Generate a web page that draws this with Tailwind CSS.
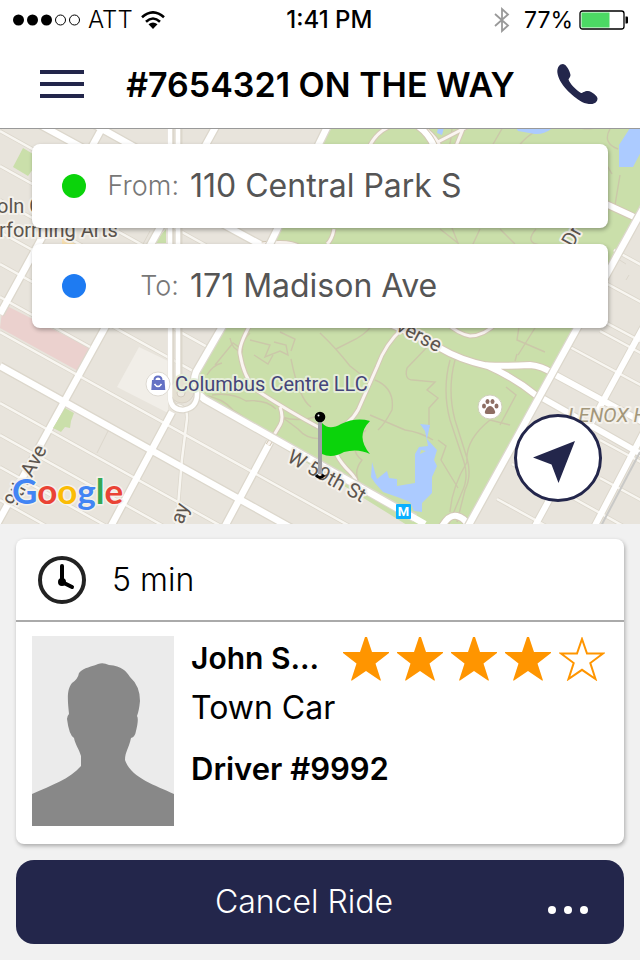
<!DOCTYPE html>
<html lang="en">
  <head>
    <meta charset="UTF-8" />
    <meta name="viewport" content="width=device-width, initial-scale=1.0" />
    <title>Ride status</title>
    <script src="https://cdn.jsdelivr.net/npm/@tailwindcss/browser@4"></script>
  </head>
  <body class="flex min-h-screen flex-col bg-[#f1f1f1] font-['Inter',sans-serif] text-black">
    <header class="border-b border-[#999] bg-white">
      <!-- status bar -->
      <div class="flex h-10 items-center justify-between px-3 text-[24px]">
        <div class="flex items-center gap-2">
          <svg class="h-3 w-[68px]" viewBox="0 0 68 12" aria-hidden="true">
            <circle cx="6.500" cy="6" r="5.500" />
            <circle cx="20.500" cy="6" r="5.500" />
            <circle cx="34.500" cy="6" r="5.500" />
            <g fill="none" stroke="#000">
              <circle cx="48.500" cy="6" r="5" />
              <circle cx="62.500" cy="6" r="5" />
            </g>
          </svg>
          <span class="font-light">ATT</span>
          <svg class="h-[18px] w-6" viewBox="0 0 24 18" aria-hidden="true">
            <g fill="none" stroke="#000" stroke-width="2.6">
              <path d="M1 6.200Q12-3.500 23 6.200" />
              <path d="M5 10.700Q12 4.300 19 10.700" />
            </g>
            <path d="M7.500 13.300Q12 9.800 16.500 13.300L12 18Z" />
          </svg>
        </div>
        <span class="font-medium">1:41 PM</span>
        <div class="flex items-center gap-[6px]">
          <svg class="mr-2 h-[26px] w-4" viewBox="0 0 16 26" fill="none" stroke="#999" stroke-width="1.800" aria-hidden="true">
            <path d="M1 7L14 18.500L8 24V2L14 7.500L1 19" />
          </svg>
          <span class="text-[23px]">77%</span>
          <svg class="h-5 w-[49px]" viewBox="0 0 49 20" aria-hidden="true">
            <rect x="1" y="1" width="44" height="18" rx="2.500" fill="#fff" stroke="#000" stroke-width="1.300" />
            <rect x="2.500" y="2.500" width="28" height="15" fill="#4cd964" />
            <path d="M46.500 6.500h1.500q1 0 1 1v5q0 1-1 1h-1.500z" />
          </svg>
        </div>
      </div>
      <!-- nav bar -->
      <div class="flex h-[88px] items-center justify-between px-10">
        <button type="button" aria-label="Menu" class="flex flex-col gap-2">
          <span class="h-1 w-11 bg-[#23264b]"></span>
          <span class="h-1 w-11 bg-[#23264b]"></span>
          <span class="h-1 w-11 bg-[#23264b]"></span>
        </button>
        <h1 class="text-[34px] font-semibold whitespace-nowrap">#7654321 ON THE WAY</h1>
        <button type="button" aria-label="Call driver">
          <svg class="h-10 w-[43px]" viewBox="0 0 43 40" fill="#23264b" aria-hidden="true">
            <path d="M.300 8C.300 3 2.500 0 6 0C9.500 .500 13 7 13.500 11C13.500 13 12 14 11.500 15.500C13 20 19 26 24 29C26 29 27 27 31 27C35 27.500 40.500 32 40.500 34.500C40.500 37.500 38 40 34 40C31 40 28 39.500 25 38C15 32 1.500 20 .300 8Z" />
          </svg>
        </button>
      </div>
    </header>

    <main class="flex flex-1 flex-col">
      <section aria-label="Map" class="relative flex-1 overflow-hidden">
        <svg class="absolute inset-0 size-full" viewBox="0 129 640 395" preserveAspectRatio="xMidYMid slice" font-family="Roboto, sans-serif" font-size="20">
          <defs>
            <g id="streets-minor">
              <path d="M0 131l420 233M0 166l420 233M0 200l420 233M0 232l420 233M0 264l420 233M0 297l90 50M0 332l420 233M0 403l300 167M0 435l300 167M0 467l200 111M0 500l100 56" />
              <path d="M174 405q14 0 13 14l-5 40L176 530" />
            </g>
            <g id="streets-major">
              <path d="M0 103l300 163M50 100l140 78M0 366l320 178M-3 524L64 402L226 108M0 314L112 110M110 528L172 412M224 528L270 442" />
            </g>
            <g id="east-minor">
              <path d="M568 346l80 43M586 312l60 32M600 280l50 27M614 250l40 22M600 331l50 27M497 499l60 33M512 464l140 78M600 478l50 27M600 440l50 27" />
            </g>
            <g id="east-major">
              <path d="M550 372L650 426M537 395L650 459M650 315L530 535M650 420L590 535" />
            </g>
            <g id="park-drives">
              <path d="M254 318Q238 345 240 354Q244 378 256 390Q290 412 320 428M280 407Q284 418 280 425L268 445M403 328Q385 344 377 367L358 410Q350 425 330 432Q332 455 350 472Q358 480 356 486M370 145Q385 118 420 125Q435 135 440 146M456 146L463 129L480 120M463 129L430 146M445 322Q458 334 470 336Q484 336 498 322M334 229Q332 240 327 244M262 244Q290 240 300 247" />
            </g>
            <g id="park-roads">
              <path d="M380 320Q410 332 440 348Q460 360 488 366Q515 378 537 396M480 364Q490 367 530 365Q542 366 552 373M606 204L632 216L640 220M405 120Q425 126 434 146M440 530Q448 514 457 516Q466 518 470 530" />
            </g>
          </defs>

          <path fill="#e8e4dc" d="M0 129h640v395H0z" />
          <path fill="#ebd1ce" d="M3 304L92 349L80 372L0 328z" />
          <path fill="#f1eee8" d="M139 347L168 361V413L117 387z" />
          <path fill="#cadfaa" d="M23 148l10 6v15l-5 7-15-9zM166 229v14h-12z" />
          <path fill="#f6dfb0" d="M62 237h14v7H62z" />
          <g fill="none" stroke="#dcd7cc">
            <path d="M108 431l-11 22M120 331l4 3M150 231l-7 13" />
            <use href="#streets-minor" stroke-width="4" />
            <use href="#streets-major" stroke-width="9" />
          </g>
          <use href="#streets-minor" fill="none" stroke="#f8f6f1" stroke-width="2.500" />
          <use href="#streets-major" fill="none" stroke="#fff" stroke-width="6.500" />
          <path fill="#cadfaa" d="M65 408l9 5-3 8-1 7-5-1-4 5-8-4z" />

          <!-- park -->
          <path fill="#cadfaa" d="M333 120L220 336L196 376L204 399L415 530H468L650 200V120z" />
          <g fill="none" stroke="#cbc7a9" stroke-width="1.400">
            <path d="M203 395q20 3 30 15q20 12 24 20M212 395q20-3 34 6q20-2 30 8M207 375q6-10 15-12M215 365l18-22l10 7M230 338q2 12 12 14q0-12 8-19M250 340l20 5l-5 12l15-6l8 4l-2-10l-12-3M254 355l14 9l5-9M280 332l15 7l-4 12M291 359q8 40 20 48M320 415q-20 8-38 2l16 12q10 12 28 9" />
            <path d="M440 146Q450 160 452 128M507 120l-15 26M560 120q-30 10-42 27M620 175l-5 30M440 229l18 14l-6-15M480 229l-14 30M536 229q-12 14 4 16M500 229l15 15" />
            <path d="M320 333q15 14 30 33l14 11M375 380q20 8 17 30q-8 15-14 20M370 415l35 15q15 2 28 10M407 368l26-27M407 368q-3 12 6 12l22 2l-8 8l11 8l-9 10v20M450 360q-8 30 0 60l14 42q5 16-2 30l-13 32M455 360q-8 30 0 60l12 38q5 18-2 32l-8 32M490 420q-25 20-23 42q-15 25-17 50M500 425l16-30l-10-8M490 420l20 5M438 440l8 6l-5 14l17 28M336 349l20-10q14-8 19-19M450 320l10 12M520 320l-3 20l28 12M517 354l-2 7M366 430q-20 18-4 30q-8 10-4 20" />
            <path d="M610 129q-8 14 8 20M598 150l14 24M570 120q10 14 32 6M540 320l-22 35" />
          </g>
          <path fill="#accbff" d="M515 126h40q-10 9-20 8l-17-3zM438 128h6l-2 7-5-2zM630 128h12v22l-9 17h-14v-22z" />
          <path fill="#accbff" fill-rule="evenodd" d="M420 424l10 1l-3 14l10 11l-3 10l3 6l-5 11v16l-10 10v9l-8-1l-4-9l-10-4l-17-6l-8-9l-4-6l1-15l5 17l10-8l2 7l8 1v7l18-3v-29l4-7l9-1l-3-15zM421 450l-1 4l6-3z" />
          <use href="#park-drives" fill="none" stroke="#d3c8b5" stroke-width="5" />
          <use href="#park-drives" fill="none" stroke="#faf5f1" stroke-width="3" />
          <use href="#park-roads" fill="none" stroke="#d3c8b5" stroke-width="8" />
          <use href="#park-roads" fill="none" stroke="#fff" stroke-width="6" />

          <!-- east side -->
          <path fill="#e8e4dc" d="M650 196L468 528H650z" />
          <g fill="none" stroke="#dcd7cc">
            <use href="#east-minor" stroke-width="4" />
            <use href="#east-major" stroke-width="8" />
            <path d="M618 259l8 5M626 280l3-5" />
          </g>
          <use href="#east-minor" fill="none" stroke="#f8f6f1" stroke-width="2.500" />
          <use href="#east-major" fill="none" stroke="#fff" stroke-width="6" />
          <path d="M640 452L600 528" stroke="#c9c9c7" stroke-width="2" />
          <path d="M650 196L466 530M333 115L270 244L196 372Q190 388 204 399L415 518" fill="none" stroke="#dcd7cc" stroke-width="9" />
          <path d="M650 196L466 530M333 115L270 244L196 372Q190 388 204 399L425 524" fill="none" stroke="#fff" stroke-width="6.500" />
          <path d="M171 120V398Q172 410 183 410Q198 408 197 392M179 120V377" fill="none" stroke="#dcd7cc" stroke-width="7" />
          <circle cx="182" cy="391" r="12" fill="#e4dfd2" stroke="#d9d3c7" />
          <circle cx="181" cy="393" r="4" fill="#eeeae2" stroke="#d3ccbf" />
          <path d="M170 120V398Q171 410 183 410Q198 408 197 392M178 120V377" fill="none" stroke="#fff" stroke-width="4.500" />

          <!-- place names -->
          <g stroke="#f4f1eb" stroke-width="4" stroke-linejoin="round" paint-order="stroke" fill="#5c554e">
            <text x="-3" y="213">oln C</text>
            <text x="-1" y="237">rforming Arts</text>
            <text transform="translate(16 508) rotate(-62)">9th Ave</text>
            <text transform="translate(183 525) rotate(-72)">ay</text>
            <text transform="translate(286 461) rotate(29)">W 59th St</text>
            <text transform="translate(395 330) rotate(28)">verse</text>
            <text transform="translate(573 248) rotate(-62)">Dr</text>
            <text x="175" y="391" fill="#44457a" stroke="#e6eed8">Columbus Centre LLC</text>
            <text x="568" y="422" fill="#a3977a" font-style="italic">LENOX H</text>
          </g>
          <circle cx="158" cy="384" r="12" fill="#fff" stroke="#dedad2" />
          <path d="M152 380h12.500l.800 10h-14z" fill="#6471c4" />
          <path d="M154.500 381v-1q0-3.500 3.500-3.500t3.500 3.500v1" fill="none" stroke="#6471c4" stroke-width="2" />
          <path d="M154.500 384q3.500 5 7 0" fill="none" stroke="#fff" stroke-width="1.500" />
          <circle cx="490" cy="407" r="12" fill="#fff" stroke="#d0cfbd" />
          <g fill="#8d6e63">
            <ellipse cx="484" cy="406" rx="2" ry="2.600" />
            <ellipse cx="487.500" cy="401.500" rx="2" ry="2.600" />
            <ellipse cx="492.500" cy="401.500" rx="2" ry="2.600" />
            <ellipse cx="496.500" cy="406" rx="2" ry="2.600" />
            <path d="M490 406q2.500 0 4.500 4q2 4-1.500 4h-6q-3.500 0-1.500-4q2-4 4.500-4z" />
          </g>
          <rect x="396" y="504" width="15" height="15" rx="1" fill="#0ab0ff" />
          <text x="403.500" y="516" font-size="13" font-weight="700" text-anchor="middle" fill="#fff">M</text>
          <text x="12" y="504" font-family="Lato, sans-serif" font-size="35" font-weight="700" stroke="#f4f1eb" stroke-width="3" paint-order="stroke"><tspan fill="#4285f4">G</tspan><tspan fill="#ea4335">o</tspan><tspan fill="#fbbc05">o</tspan><tspan fill="#4285f4">g</tspan><tspan fill="#34a853">l</tspan><tspan fill="#ea4335">e</tspan></text>

          <!-- pickup flag -->
          <path d="M316 475q4 5 8 0" fill="none" stroke="#000" stroke-width="3" />
          <path d="M320 420v54" stroke="#a0a0a5" stroke-width="4" />
          <path d="M322 423Q329 431 341 424Q356 417 370 421Q355 436 370 454Q358 448 344 452Q332 459 322 454z" fill="#0bd30b" />
          <circle cx="320" cy="417" r="5.300" />
          <circle cx="318.500" cy="415.500" r="1" fill="#fff" />
        </svg>

        <dl class="relative flex flex-col gap-4 px-8 pt-[15px] text-[#555]">
          <div class="flex h-[84px] items-center rounded-lg bg-white px-[30px] shadow-[1px_2px_4px_rgba(0,0,0,0.3)]">
            <span class="size-6 rounded-full bg-[#0bd30b]"></span>
            <dt class="w-[93px] text-right text-[27px] font-light text-[#777]">From:</dt>
            <dd class="ml-[11px] text-[32px] whitespace-nowrap">110 Central Park S</dd>
          </div>
          <div class="flex h-[84px] items-center rounded-lg bg-white px-[30px] shadow-[1px_2px_4px_rgba(0,0,0,0.3)]">
            <span class="size-6 rounded-full bg-[#1e7bf2]"></span>
            <dt class="w-[93px] text-right text-[27px] font-light text-[#777]">To:</dt>
            <dd class="ml-[11px] text-[32px] whitespace-nowrap">171 Madison Ave</dd>
          </div>
        </dl>

        <button type="button" aria-label="Center on my location" class="absolute right-[38px] bottom-[22px] flex size-[88px] items-center justify-center rounded-full border-[3px] border-[#23264b] bg-white">
          <svg class="size-[50px]" viewBox="0 0 50 50" fill="#23264b" aria-hidden="true">
            <path d="M42 8L25.500 50L18.500 31.500L0 24.500z" />
          </svg>
        </button>
      </section>

      <section class="flex flex-col gap-4 px-4 pt-[15px] pb-4">
        <article class="rounded-lg bg-white shadow-[1px_2px_4px_rgba(0,0,0,0.3)]">
          <div class="flex h-[83px] items-center gap-[26px] border-b-2 border-[#aaa] pl-[22px]">
            <svg class="size-12" viewBox="0 0 48 48" fill="none" stroke="#000" stroke-linecap="round" aria-hidden="true">
              <circle cx="24" cy="24" r="22" stroke="#222" stroke-width="4" />
              <path d="M24 10v16l10 5" stroke-width="4" />
              <circle cx="24" cy="26" r="2" stroke-width="4" />
            </svg>
            <p class="text-[32px] font-light">5 min</p>
          </div>
          <div class="flex gap-[17px] px-4 pt-[14px] pb-[18px]">
            <svg class="h-[190px] w-[142px] shrink-0" viewBox="0 0 142 190" role="img" aria-label="Driver photo">
              <path fill="#ebebeb" d="M0 0h142v190H0z" />
              <path fill="#888" d="M0 158C20 149 38 143 49 130V120C47 113 43 108 42 102Q37 99 35 83Q35 80 37 78C36 67 34 54 40 47Q46 43 47 37C52 31 60 31 66 28Q71 26 77 29C90 30 94 35 98 41Q108 50 108 65Q107 75 105 80Q107 83 104 95Q103 101 99 102C97 112 93 116 93 124C99 142 123 149 142 158V190H0z" />
            </svg>
            <div class="min-w-0 flex-1">
              <div class="flex h-11 items-center justify-between">
                <h2 class="text-[30px] font-semibold whitespace-nowrap">John S...</h2>
                <div class="mt-0.5 mr-[3px] flex shrink-0 gap-2 text-[#ff9500]" role="img" aria-label="4 out of 5 stars">
                  <svg class="h-11 w-[46px]" viewBox="0 0 46 44" fill="currentColor"><path d="M22 0h2l5 15H46v1L32.500 26.500L38 43.500h-1L23 34L9 43.500H8l5.500-17L0 16v-1h17z" /></svg>
                  <svg class="h-11 w-[46px]" viewBox="0 0 46 44" fill="currentColor"><path d="M22 0h2l5 15H46v1L32.500 26.500L38 43.500h-1L23 34L9 43.500H8l5.500-17L0 16v-1h17z" /></svg>
                  <svg class="h-11 w-[46px]" viewBox="0 0 46 44" fill="currentColor"><path d="M22 0h2l5 15H46v1L32.500 26.500L38 43.500h-1L23 34L9 43.500H8l5.500-17L0 16v-1h17z" /></svg>
                  <svg class="h-11 w-[46px]" viewBox="0 0 46 44" fill="currentColor"><path d="M22 0h2l5 15H46v1L32.500 26.500L38 43.500h-1L23 34L9 43.500H8l5.500-17L0 16v-1h17z" /></svg>
                  <svg class="h-11 w-[46px]" viewBox="0 0 46 44" fill="none" stroke="currentColor" stroke-width="2"><path d="M23 2l5 14.500H44L31.300 26L36.500 42L23 32.800L9.500 42l5.200-16L2 16.500h16z" /></svg>
                </div>
              </div>
              <p class="mt-1 text-[32px]">Town Car</p>
              <p class="mt-[14px] text-[31px] font-semibold">Driver #9992</p>
            </div>
          </div>
        </article>

        <button type="button" class="flex h-[84px] items-center rounded-[18px] bg-[#23264b] pr-9 pl-11 text-[32px] font-light text-white">
          <span class="flex-1">Cancel Ride</span>
          <span class="mt-4 flex gap-2">
            <span class="size-2 rounded-full bg-white"></span>
            <span class="size-2 rounded-full bg-white"></span>
            <span class="size-2 rounded-full bg-white"></span>
          </span>
        </button>
      </section>
    </main>
  </body>
</html>
